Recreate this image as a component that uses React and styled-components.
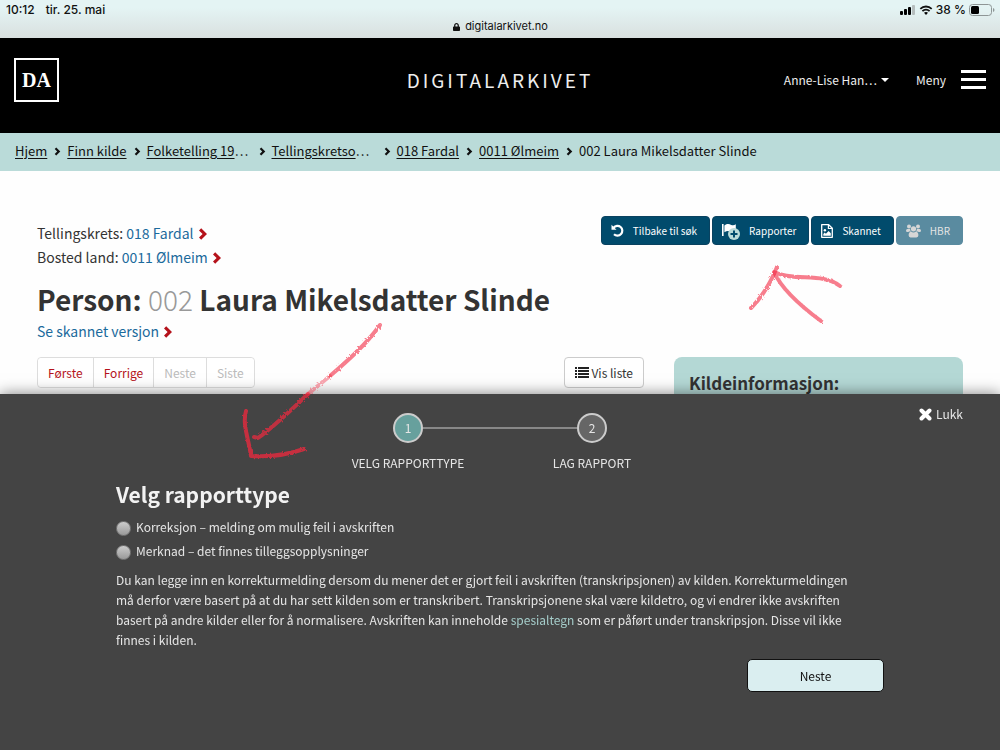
import React from "react";
import styled, { createGlobalStyle } from "styled-components";
import { FaLock } from "react-icons/fa";

const GlobalStyle = createGlobalStyle`
  * {
    box-sizing: border-box;
  }

  body {
    margin: 0;
    background: #fefefe;
    color: #333;
    font: 14px/24px "Noto Sans CJK SC", "Noto Sans", sans-serif;
  }

  button {
    font: inherit;
    color: inherit;
    cursor: pointer;
  }
`;

const Page = styled.div`
  position: relative;
  min-height: 100vh;
`;

const StatusBar = styled.div`
  padding: 1px 5px 3px 6px;
  background: linear-gradient(#e4f4f4 20%, #d9e0df);
  color: #111;
  font: 12px/17px Inter, "Liberation Sans", sans-serif;
`;

const StatusRow = styled.div`
  display: flex;
  justify-content: space-between;
  font-weight: 500;
`;

const StatusGroup = styled.div`
  display: flex;
  align-items: center;
  gap: ${(props) => props.$gap};
`;

const Address = styled.div`
  display: flex;
  justify-content: center;
  align-items: center;
  gap: 5px;
  font-size: 11px;

  svg {
    width: 7px;
    height: 10px;
  }
`;

const Header = styled.header`
  display: grid;
  grid-template-columns: 1fr auto 1fr;
  align-items: center;
  min-height: 95px;
  padding: 8px 14px 20px;
  background: #000;
  color: #eee;
`;

const Logo = styled.a`
  justify-self: start;
  display: grid;
  place-items: center;
  width: 45px;
  height: 44px;
  border: 2px solid #fff;
  color: #fff;
  font: bold 20px/20px "Liberation Serif", serif;
  text-decoration: none;
`;

const SiteName = styled.a`
  color: #eee;
  font-size: 19px;
  letter-spacing: 3px;
  text-decoration: none;
`;

const HeaderTools = styled.div`
  display: flex;
  justify-content: flex-end;
  align-items: center;
  gap: 27px;
`;

const HeaderButton = styled.button`
  display: flex;
  align-items: center;
  gap: ${(props) => props.$gap};
  padding: 0;
  border: 0;
  background: none;
  font-size: 12px;
`;

const Breadcrumbs = styled.nav`
  background: #badbd9;
  font-size: 13px;

  ol {
    display: flex;
    align-items: center;
    margin: 0;
    padding: 6px 15px 8px;
    list-style: none;
    color: #111;
    white-space: nowrap;
  }

  li {
    display: flex;
    align-items: center;
  }

  li + li svg {
    margin: 1px 6px 0 7px;
  }
`;

const Crumb = styled.span`
  min-width: ${(props) => (props.$cut ? "105px" : "0")};

  a {
    color: #111;
    text-underline-offset: 2px;
  }
`;

const Main = styled.main`
  padding: 45px 37px 0;
`;

const TopRow = styled.div`
  display: flex;
  justify-content: space-between;
  align-items: flex-start;
`;

const Places = styled.div`
  padding-top: 5px;
`;

const BlueLink = styled.a`
  color: #1b6a9c;
  text-decoration: none;

  svg {
    margin-left: 4px;
    vertical-align: -1px;
  }
`;

const Toolbar = styled.div`
  display: flex;
  gap: 2px;
`;

const ToolButton = styled.button`
  display: flex;
  align-items: center;
  gap: 9px;
  height: 29px;
  padding: 0 12px 0 9px;
  border: 1px solid #0a4260;
  border-radius: 4px;
  background: #014b6c;
  color: #fff;
  font-size: 10px;

  &:disabled {
    border-color: #5a8ba0;
    background: #5a8ba0;
    color: #e4e4e4;
  }
`;

const Title = styled.h1`
  margin: 15px 0 5px;
  font-size: 28px;
  line-height: 30px;
`;

const Muted = styled.span`
  color: #999;
  font-weight: 300;
`;

const Columns = styled.div`
  display: grid;
  grid-template-columns: minmax(0, 607fr) minmax(0, 289fr);
  gap: 30px;
  margin-top: 14px;
`;

const PagerRow = styled.div`
  display: flex;
  justify-content: space-between;
  align-items: flex-start;
`;

const Pager = styled.div`
  display: flex;
  border: 1px solid #ddd;
  border-radius: 4px;
`;

const PagerButton = styled.button`
  height: 29px;
  padding: 0 10px;
  border: 0;
  border-radius: 4px;
  background: #fff;
  color: #b5121b;
  font-size: 12px;

  &:disabled {
    color: #bbb;
  }

  & + & {
    border-left: 1px solid #ddd;
    border-radius: 0 4px 4px 0;
  }
`;

const ListButton = styled.button`
  display: flex;
  align-items: center;
  gap: 2px;
  height: 31px;
  padding: 0 10px;
  border: 1px solid #ccc;
  border-radius: 4px;
  background: #fff;
  font-size: 12px;
`;

const SourceCard = styled.aside`
  min-height: 120px;
  padding: 14px 15px;
  border-radius: 8px;
  background: #b4d8d5;

  h2 {
    margin: 0;
    font-size: 17px;
  }
`;

const Panel = styled.section`
  position: fixed;
  right: 0;
  bottom: 0;
  left: 0;
  padding: 19px 37px 58px;
  background: #444;
  box-shadow: 0 0 14px rgba(0, 0, 0, 0.5);
  color: #e6e6e6;
  font-size: 12px;
`;

const PanelTop = styled.div`
  display: grid;
  grid-template-columns: 1fr auto 1fr;
  align-items: start;
`;

const Steps = styled.ol`
  grid-column: 2;
  display: grid;
  grid-template-columns: 184px 184px;
  margin: 0;
  padding: 0;
  list-style: none;
`;

const Step = styled.li`
  display: grid;
  grid-template-columns: 1fr auto 1fr;
  align-items: center;
  row-gap: 8px;
  text-align: center;
  text-transform: uppercase;

  &::before,
  &::after {
    content: "";
    height: 2px;
    background: #888;
  }

  &:first-child::before,
  &:last-child::after {
    visibility: hidden;
  }

  &::after {
    grid-row: 1;
    grid-column: 3;
  }
`;

const StepNumber = styled.span`
  width: 30px;
  height: 30px;
  border: 2px solid #ccc;
  border-radius: 50%;
  background: ${(props) => (props.$active ? "#67a09d" : "#666")};
  line-height: 26px;
`;

const StepLabel = styled.span`
  grid-row: 2;
  grid-column: 1 / -1;
`;

const CloseButton = styled.button`
  grid-column: 3;
  justify-self: end;
  display: flex;
  align-items: center;
  gap: 4px;
  height: 20px;
  margin-top: -9px;
  padding: 0;
  border: 0;
  background: none;
`;

const ReportForm = styled.form`
  max-width: 768px;
  margin: 5px auto 0;

  h2 {
    margin: 0 0 7px;
    color: #f2f2f2;
    font-size: 21px;
    line-height: 28px;
  }

  p {
    max-width: 748px;
    margin: 7px 0 9px;
    line-height: 20px;
  }
`;

const Choice = styled.label`
  display: flex;
  align-items: center;
  gap: 5px;
`;

const Radio = styled.input`
  appearance: none;
  width: 15px;
  height: 15px;
  margin: 2px 0 0;
  border: 1px solid #777;
  border-radius: 50%;
  background: linear-gradient(#ccc, #999);

  &:checked {
    background: radial-gradient(#333 30%, #bbb 35%);
  }
`;

const SpecialLink = styled.a`
  color: #a5cdca;
  text-decoration: none;
`;

const NextButton = styled.button`
  display: block;
  width: 137px;
  height: 33px;
  margin-left: auto;
  border: 1px solid #111;
  border-radius: 5px;
  background: #daeef0;
  color: #111;
`;

const Scribbles = styled.svg`
  position: absolute;
  top: 0;
  left: 0;
  z-index: 2;
  pointer-events: none;
`;

const Chevron = ({ size = 10, color = "#b5121b" }) => (
  <svg width={size} height={size + 2} viewBox="0 0 10 12" aria-hidden="true">
    <path fill={color} d="M1 2.4 3.2.2 9 6l-5.8 5.8L1 9.6 4.6 6z" />
  </svg>
);

const UndoIcon = () => (
  <svg width="13" height="13" viewBox="0 0 13 13">
    <path d="M2.6 3.6A4.9 4.9 0 1 1 3 10.2" fill="none" stroke="#fff" strokeWidth="2.2" />
    <path d="M.5.8v5h5z" fill="#fff" />
  </svg>
);

const FlagPlusIcon = () => (
  <svg width="18" height="18" viewBox="0 0 18 18">
    <path d="M0 2h1.6v12H0z" fill="#fff" />
    <path
      d="M2.4 3.4c3-2.200 5-1.400 6.800-.5 1.800.8 3 .5 4.600-.6v7.200c-2 1.300-3.600 1.100-5.200.3-2-1-3.700-1-6.200.5z"
      fill="#fff"
    />
    <circle cx="12" cy="12" r="6" fill="#badbd9" />
    <path d="M12 8.5v7M8.5 12h7" stroke="#014b6c" strokeWidth="2" />
  </svg>
);

const FileImageIcon = () => (
  <svg width="12" height="14" viewBox="0 0 12 14">
    <path d="M.7.7h7l3.600 3.600v9H.7z" fill="none" stroke="#fff" strokeWidth="1.3" strokeLinejoin="round" />
    <path d="M7.400.7v3.800h3.900" fill="none" stroke="#fff" strokeWidth="1.2" />
    <circle cx="3.9" cy="6.3" r="1.2" fill="#fff" />
    <path d="M2.3 11.8V10l1.4-1.4 1.2 1.2 2.7-2.7 2.2 2.2v2.5z" fill="#fff" />
  </svg>
);

const UsersIcon = () => (
  <svg width="15" height="14" viewBox="0 0 16 14" fill="#d6d6d6">
    <circle cx="3.2" cy="2.2" r="2.1" />
    <circle cx="12.8" cy="2.2" r="2.1" />
    <circle cx="8" cy="4.6" r="2.8" />
    <path d="M1.5 4.8h2.9c0 1.3.4 2 1.1 2.7H3.2L2.7 8H1.5Q0 8 0 6.6 0 4.8 1.5 4.8M14.5 4.8h-2.9c0 1.3-.4 2-1.1 2.7h2.3l.5.5h1.2Q16 8 16 6.6q0-1.8-1.5-1.8" />
    <path d="M5.4 7.6Q8 9.4 10.6 7.6q2.6.6 2.6 4 0 2.2-2 2.2H4.8q-2 0-2-2.2 0-3.4 2.6-4" />
  </svg>
);

const crumbs = [
  { text: "Hjem" },
  { text: "Finn kilde" },
  { text: "Folketelling 19", cut: true },
  { text: "Tellingskretso", cut: true },
  { text: "018 Fardal" },
  { text: "0011 Ølmeim" },
];

function App() {
  return (
    <Page>
      <GlobalStyle />
      <StatusBar>
        <StatusRow>
          <StatusGroup $gap="11px">
            <span>10:12</span>
            <span>tir. 25. mai</span>
          </StatusGroup>
          <StatusGroup $gap="3px">
            <svg width="16" height="10" viewBox="0 0 16 10">
              <rect y="6" width="3" height="4" rx="1" />
              <rect x="4" y="4" width="3" height="6" rx="1" />
              <rect x="8" y="2" width="3" height="8" rx="1" />
              <rect x="12" width="3" height="10" rx="1" fill="#b5bdbd" />
            </svg>
            <svg width="14" height="10" viewBox="0 0 13 10">
              <g fill="none" stroke="#111" strokeWidth="1.8">
                <path d="M.8 3.8a8.2 8.2 0 0 1 11.4 0" />
                <path d="M2.9 6.2a5.2 5.2 0 0 1 7.2 0" />
              </g>
              <path d="M4.5 7.8a3 3 0 0 1 4 0l-2 2.2z" />
            </svg>
            <span>38 %</span>
            <svg width="26" height="12" viewBox="0 0 26 12">
              <rect x=".5" y=".5" width="22" height="11" rx="3" fill="none" stroke="#8e9696" />
              <rect x="2" y="2" width="8" height="8" rx="1.5" />
              <path d="M24 4v4q1.5-.5 1.5-2T24 4" fill="#8e9696" />
            </svg>
          </StatusGroup>
        </StatusRow>
        <Address>
          <FaLock />
          digitalarkivet.no
        </Address>
      </StatusBar>

      <Header>
        <Logo href="#">DA</Logo>
        <SiteName href="#">DIGITALARKIVET</SiteName>
        <HeaderTools>
          <HeaderButton $gap="4px">
            Anne-Lise Han…
            <svg width="8" height="4" viewBox="0 0 8 4">
              <path d="M0 0h8L4 4z" fill="#fff" />
            </svg>
          </HeaderButton>
          <HeaderButton $gap="15px">
            Meny
            <svg width="25" height="20" viewBox="0 0 25 20">
              <path d="M0 0h25v3H0zM0 8h25v3H0zM0 16h25v3H0z" fill="#fff" />
            </svg>
          </HeaderButton>
        </HeaderTools>
      </Header>

      <Breadcrumbs>
        <ol>
          {crumbs.map((crumb, i) => (
            <li key={crumb.text}>
              {i > 0 && <Chevron size={7} color="#111" />}
              <Crumb $cut={crumb.cut}>
                <a href="#">{crumb.text}</a>
                {crumb.cut && "…"}
              </Crumb>
            </li>
          ))}
          <li>
            <Chevron size={7} color="#111" />
            002 Laura Mikelsdatter Slinde
          </li>
        </ol>
      </Breadcrumbs>

      <Main>
        <TopRow>
          <Places>
            <div>
              Tellingskrets: <BlueLink href="#">018 Fardal<Chevron /></BlueLink>
            </div>
            <div>
              Bosted land: <BlueLink href="#">0011 Ølmeim<Chevron /></BlueLink>
            </div>
          </Places>
          <Toolbar>
            <ToolButton>
              <UndoIcon />
              Tilbake til søk
            </ToolButton>
            <ToolButton>
              <FlagPlusIcon />
              Rapporter
            </ToolButton>
            <ToolButton>
              <FileImageIcon />
              Skannet
            </ToolButton>
            <ToolButton disabled>
              <UsersIcon />
              HBR
            </ToolButton>
          </Toolbar>
        </TopRow>

        <Title>
          Person: <Muted>002</Muted> Laura Mikelsdatter Slinde
        </Title>
        <BlueLink href="#">Se skannet versjon<Chevron /></BlueLink>

        <Columns>
          <PagerRow>
            <Pager>
              <PagerButton>Første</PagerButton>
              <PagerButton>Forrige</PagerButton>
              <PagerButton disabled>Neste</PagerButton>
              <PagerButton disabled>Siste</PagerButton>
            </Pager>
            <ListButton>
              <svg width="14" height="12" viewBox="0 0 14 12">
                <path
                  fill="#222"
                  d="M0 0h2v2H0zM3 0h11v2H3zM0 3h2v2H0zM3 3h11v2H3zM0 6h2v2H0zM3 6h11v2H3zM0 9h2v2H0zM3 9h11v2H3z"
                />
              </svg>
              Vis liste
            </ListButton>
          </PagerRow>
          <SourceCard>
            <h2>Kildeinformasjon:</h2>
          </SourceCard>
        </Columns>
      </Main>

      <Panel>
        <PanelTop>
          <Steps>
            <Step>
              <StepNumber $active>1</StepNumber>
              <StepLabel>Velg rapporttype</StepLabel>
            </Step>
            <Step>
              <StepNumber>2</StepNumber>
              <StepLabel>Lag rapport</StepLabel>
            </Step>
          </Steps>
          <CloseButton>
            <svg width="13" height="13" viewBox="0 0 13 13">
              <path d="m2.5 2.5 8 8m0-8-8 8" stroke="#fff" strokeWidth="4" strokeLinecap="round" />
            </svg>
            Lukk
          </CloseButton>
        </PanelTop>
        <ReportForm>
          <h2>Velg rapporttype</h2>
          <Choice>
            <Radio type="radio" name="type" value="korreksjon" />
            Korreksjon – melding om mulig feil i avskriften
          </Choice>
          <Choice>
            <Radio type="radio" name="type" value="merknad" />
            Merknad – det finnes tilleggsopplysninger
          </Choice>
          <p>
            Du kan legge inn en korrekturmelding dersom du mener det er gjort feil i avskriften
            (transkripsjonen) av kilden. Korrekturmeldingen må derfor være basert på at du har sett
            kilden som er transkribert. Transkripsjonene skal være kildetro, og vi endrer ikke
            avskriften basert på andre kilder eller for å normalisere. Avskriften kan inneholde{" "}
            <SpecialLink href="#">spesialtegn</SpecialLink> som er påført under transkripsjon. Disse
            vil ikke finnes i kilden.
          </p>
          <NextButton type="button">Neste</NextButton>
        </ReportForm>
      </Panel>

      <Scribbles width="1000" height="750" viewBox="0 0 1000 750" aria-hidden="true">
        <defs>
          <filter id="crayon">
            <feTurbulence type="fractalNoise" baseFrequency="0.5" numOctaves="2" />
            <feDisplacementMap in="SourceGraphic" scale="3" />
          </filter>
        </defs>
        <g
          fill="none"
          stroke="#f2283f"
          strokeLinecap="round"
          strokeLinejoin="round"
          strokeWidth="4"
          filter="url(#crayon)"
        >
          <path strokeOpacity=".6" d="M380 325C366 345 345 363 330 376" />
          <path strokeOpacity=".4" d="M330 376Q320 384 308 394" />
          <path strokeOpacity=".7" d="M308 394C292 409 277 424 258 438L254 437" />
          <path strokeOpacity=".75" d="M246 411C242 424 249 440 251 456Q278 458 304 449" />
          <path strokeOpacity=".6" d="M751 308C762 297 771 282 777 267" />
          <path strokeOpacity=".6" d="M821 321C802 307 782 290 774 272C795 282 822 272 840 286" />
        </g>
      </Scribbles>
    </Page>
  );
}

export default App;
